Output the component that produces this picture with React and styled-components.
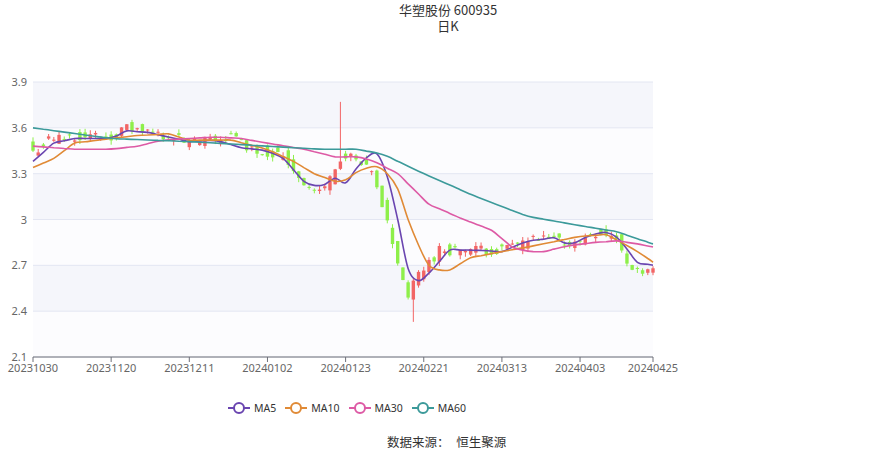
import React from "react";
import styled, { createGlobalStyle } from "styled-components";

const Global = createGlobalStyle`
  body { margin: 0; background: #fff; font-family: "Noto Sans CJK SC", "Noto Sans", sans-serif; }
`;

const Page = styled.div`
  width: 896px;
  height: 451px;
  display: flex;
  flex-direction: column;
  background: #fff;
  color: #333;
`;

const Title = styled.div`
  height: 36px;
  padding-top: 2px;
  box-sizing: border-box;
  text-align: center;
  font-size: 13px;
  line-height: 16px;
  color: #333;
`;

const Chart = styled.svg`
  display: block;
`;

const Legend = styled.div`
  display: flex;
  gap: 9px;
  padding-left: 228px;
  margin-top: 18px;
  height: 18px;
  align-items: center;
`;

const LegendItem = styled.div`
  display: flex;
  align-items: center;
  gap: 4px;
  font-size: 10.5px;
  color: #333;
  font-family: "Noto Sans", sans-serif;
`;

const Source = styled.div`
  margin-top: 15px;
  padding-left: 387px;
  font-size: 12.5px;
  color: #333;
  word-spacing: 4px;
`;

const X0 = 33, X1 = 653, N = 120;
const step = (X1 - X0) / (N - 1);
const py = (p) => 82 + ((3.9 - p) / 1.8) * 275;
const px = (i) => X0 + i * step;

const interp = (keys) => {
  const out = [];
  for (let i = 0; i < N; i++) {
    let k = 0;
    while (k < keys.length - 2 && keys[k + 1][0] < i) k++;
    const [a, va] = keys[k], [b, vb] = keys[k + 1];
    const t = Math.min(1, Math.max(0, (i - a) / (b - a)));
    out.push(va + (vb - va) * t);
  }
  return out;
};

const MA5 = interp([[0,3.38],[4,3.5],[8,3.53],[15,3.53],[18,3.58],[22,3.57],[26,3.54],[30,3.51],[35,3.52],[40,3.47],[45,3.45],[48,3.4],[52,3.25],[55,3.21],[58,3.27],[60,3.24],[62,3.33],[65,3.44],[67,3.42],[70,3.0],[72,2.68],[74,2.6],[76,2.65],[80,2.8],[85,2.8],[90,2.79],[95,2.86],[100,2.88],[103,2.83],[107,2.9],[111,2.92],[113,2.85],[116,2.72],[119,2.7]]);
const MA10 = interp([[0,3.34],[4,3.4],[8,3.5],[15,3.53],[20,3.55],[26,3.56],[30,3.52],[38,3.52],[45,3.46],[50,3.38],[54,3.3],[58,3.25],[60,3.26],[63,3.33],[67,3.35],[70,3.2],[73,2.9],[76,2.7],[78,2.67],[80,2.67],[84,2.75],[90,2.79],[95,2.82],[105,2.89],[110,2.9],[113,2.85],[117,2.77],[119,2.72]]);
const MA30 = interp([[0,3.48],[8,3.46],[15,3.46],[20,3.48],[25,3.52],[35,3.54],[40,3.53],[45,3.5],[52,3.46],[58,3.41],[62,3.41],[65,3.39],[70,3.3],[76,3.1],[82,3.01],[88,2.93],[92,2.82],[95,2.79],[98,2.79],[103,2.83],[108,2.85],[112,2.86],[116,2.84],[119,2.82]]);
const MA60 = interp([[0,3.6],[15,3.53],[30,3.51],[45,3.48],[55,3.46],[62,3.46],[67,3.43],[75,3.3],[85,3.15],[95,3.02],[105,2.96],[112,2.92],[119,2.84]]);
const PRICE = interp([[0,3.44],[3,3.52],[8,3.55],[15,3.54],[18,3.6],[22,3.57],[26,3.55],[30,3.5],[35,3.52],[38,3.55],[42,3.46],[45,3.44],[48,3.42],[50,3.33],[53,3.2],[55,3.18],[57,3.27],[59,3.4],[61,3.4],[63,3.35],[65,3.3],[67,3.1],[69,2.85],[71,2.6],[72,2.5],[74,2.64],[76,2.72],[78,2.8],[85,2.8],[90,2.8],[95,2.86],[100,2.87],[104,2.84],[108,2.92],[112,2.88],[114,2.7],[116,2.68],[119,2.66]]);

let seed = 11;
const rnd = () => { seed = (seed * 9301 + 49297) % 233280; return seed / 233280; };

const candles = PRICE.map((p, i) => {
  const close = p + (rnd() - 0.5) * 0.07;
  const open = i === 0 ? close + 0.06 : PRICE[i - 1] + (rnd() - 0.5) * 0.08;
  let high = Math.max(open, close) + rnd() * 0.03;
  let low = Math.min(open, close) - rnd() * 0.03;
  if (i === 59) { high = 3.77; }
  if (i === 73) { low = 2.33; }
  return { open, close, high, low };
});

const smooth = (arr) => {
  const pts = [];
  for (let i = 0; i < N; i += 2) pts.push([px(i), py(arr[i])]);
  if ((N - 1) % 2) pts.push([px(N - 1), py(arr[N - 1])]);
  let d = `M${pts[0][0]},${pts[0][1]}`;
  for (let i = 0; i < pts.length - 1; i++) {
    const p0 = pts[i - 1] || pts[i], p1 = pts[i], p2 = pts[i + 1], p3 = pts[i + 2] || p2;
    const c1 = [p1[0] + (p2[0] - p0[0]) / 6, p1[1] + (p2[1] - p0[1]) / 6];
    const c2 = [p2[0] - (p3[0] - p1[0]) / 6, p2[1] - (p3[1] - p1[1]) / 6];
    d += ` C${c1[0].toFixed(1)},${c1[1].toFixed(1)} ${c2[0].toFixed(1)},${c2[1].toFixed(1)} ${p2[0].toFixed(1)},${p2[1].toFixed(1)}`;
  }
  return d;
};

const series = [
  { name: "MA5", color: "#6a45b0", data: MA5 },
  { name: "MA10", color: "#e08a36", data: MA10 },
  { name: "MA30", color: "#dd5aa5", data: MA30 },
  { name: "MA60", color: "#3c9a9a", data: MA60 },
];

const ticks = [3.9, 3.6, 3.3, 3.0, 2.7, 2.4, 2.1];
const tickLabel = (t) => (t === 3 ? "3" : t.toFixed(1));
const dates = ["20231030","20231120","20231211","20240102","20240123","20240221","20240313","20240403","20240425"];

const LegendIcon = ({ color }) => (
  <svg width="22" height="14">
    <line x1="0" y1="7" x2="22" y2="7" stroke={color} strokeWidth="2" />
    <circle cx="11" cy="7" r="5" fill="#fff" stroke={color} strokeWidth="2" />
  </svg>
);

export default function App() {
  return (
    <Page>
      <Global />
      <Title>
        <div>华塑股份 600935</div>
        <div>日K</div>
      </Title>
      <Chart width="896" height="345" viewBox="0 36 896 345">
        {ticks.slice(0, -1).map((t, i) => (
          <rect key={t} x={X0} y={py(t)} width={X1 - X0} height={py(t - 0.3) - py(t)} fill={i % 2 === 0 ? "#f5f6fb" : "#fcfcfe"} />
        ))}
        {ticks.map((t) => (
          <g key={t}>
            <line x1={X0} x2={X1} y1={py(t)} y2={py(t)} stroke="#e3e6f2" />
            <text x={27} y={py(t) + 4} fontSize="11" fill="#666" textAnchor="end" fontFamily="Noto Sans, sans-serif">{tickLabel(t)}</text>
          </g>
        ))}
        <line x1={X0} x2={X1} y1={357} y2={357} stroke="#6e7079" />
        {dates.map((d, i) => {
          const x = i === 8 ? X1 : px(i * 15);
          return (
            <g key={d}>
              <line x1={x} x2={x} y1={357} y2={362} stroke="#6e7079" />
              <text x={x} y={372} fontSize="11" fill="#666" textAnchor="middle" fontFamily="Noto Sans, sans-serif">{d}</text>
            </g>
          );
        })}
        {candles.map((c, i) => {
          const up = c.close >= c.open;
          const col = up ? "#f26565" : "#8eef4a";
          const top = py(Math.max(c.open, c.close));
          const h = Math.max(1, py(Math.min(c.open, c.close)) - top);
          return (
            <g key={i}>
              <line x1={px(i)} x2={px(i)} y1={py(c.high)} y2={py(c.low)} stroke={col} strokeWidth="1" />
              <rect x={px(i) - 1.7} y={top} width="3.4" height={h} fill={col} />
            </g>
          );
        })}
        {series.map((s) => (
          <path key={s.name} d={smooth(s.data)} fill="none" stroke={s.color} strokeWidth="1.6" strokeLinejoin="round" />
        ))}
      </Chart>
      <Legend>
        {series.map((s) => (
          <LegendItem key={s.name}>
            <LegendIcon color={s.color} />
            {s.name}
          </LegendItem>
        ))}
      </Legend>
      <Source>数据来源： 恒生聚源</Source>
    </Page>
  );
}
